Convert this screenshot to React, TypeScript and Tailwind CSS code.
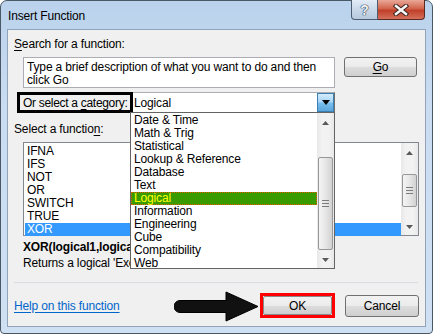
import React from "react";

const font = "font-['Liberation_Sans',Arial,sans-serif]";

function UpArrow() {
  return (
    <svg width="7" height="4" viewBox="0 0 7 4">
      <path d="M0 4 L3.5 0 L7 4 Z" fill="#5a5a5a" />
    </svg>
  );
}
function DownArrow() {
  return (
    <svg width="7" height="4" viewBox="0 0 7 4">
      <path d="M0 0 L3.5 4 L7 0 Z" fill="#5a5a5a" />
    </svg>
  );
}

function Thumb({ h }: { h: string }) {
  return (
    <div
      className={`w-[15px] ${h} rounded-[2px] border border-[#979797] bg-[linear-gradient(90deg,#f4f4f4,#e6e6e6_50%,#d2d2d2)] flex flex-col items-center justify-center gap-[2px]`}
    >
      <div className="w-[7px] h-[1px] bg-[#7c7c7c]" />
      <div className="w-[7px] h-[1px] bg-[#7c7c7c]" />
      <div className="w-[7px] h-[1px] bg-[#7c7c7c]" />
    </div>
  );
}

const categories = [
  "Date & Time",
  "Math & Trig",
  "Statistical",
  "Lookup & Reference",
  "Database",
  "Text",
  "Logical",
  "Information",
  "Engineering",
  "Cube",
  "Compatibility",
  "Web",
];

const functions = ["IFNA", "IFS", "NOT", "OR", "SWITCH", "TRUE", "XOR"];

export default function App() {
  return (
    <div className={`${font} text-[12px] tracking-[-0.15px] text-black w-[433px] h-[334px] relative`}>
      <div className="w-[433px] h-[334px] border border-[#4a5866] rounded-t-[7px] rounded-b-[4px] bg-[linear-gradient(180deg,#bad2ec,#c9dcf1_30%,#cfe0f3)] flex flex-col relative">
        {/* Title bar */}
        <div className="h-[28px] flex items-center pl-[7px] pt-[1px]">
          <span className="leading-[14px] text-[12px] text-black">Insert Function</span>
        </div>
        {/* caption buttons */}
        <div className="absolute top-[-1px] right-[7px] flex">
          <div className="w-[27px] h-[20px] border border-[#4d5d70] border-t-0 rounded-bl-[4px] bg-[linear-gradient(180deg,#e3ecf6,#c9d8e9_50%,#b7c9de)] flex items-center justify-center">
            <span className="text-[14px] font-bold leading-[14px] text-[#eef2f6] [text-shadow:0_0_1px_#2f3a46,0_0_1px_#2f3a46,0_0_1px_#2f3a46]">?</span>
          </div>
          <div className="w-[47px] h-[20px] border border-l-0 border-t-0 border-[#5a2a22] rounded-br-[4px] bg-[linear-gradient(180deg,#e9a897,#d2644c_45%,#c0402a_55%,#d6705a)] flex items-center justify-center">
            <svg width="16" height="12" viewBox="0 0 16 12">
              <path d="M3 2 L13 10 M13 2 L3 10" stroke="#3a2420" strokeWidth="4.5" strokeLinecap="square" />
              <path d="M3 2 L13 10 M13 2 L3 10" stroke="#f8f8f8" strokeWidth="2.5" strokeLinecap="square" />
            </svg>
          </div>
        </div>

        {/* Client area */}
        <div className="mx-[6px] h-[298px] border border-[#90a3b9] bg-[#f0f0f0] relative flex flex-col">
          <div className="mt-[7px] ml-[6px] h-[14px] leading-[14px] whitespace-nowrap">
            <span className="underline underline-offset-2">S</span>earch for a function:
          </div>

          <div className="mt-[6px] flex">
            <div className="ml-[15px] w-[312px] h-[31px] border border-[#abadb3] bg-white px-[3px] pt-[3px] leading-[13px]">
              Type a brief description of what you want to do and then click Go
            </div>
            <div className="ml-[9px] w-[73px] h-[20px] border border-[#707070] rounded-[3px] bg-[linear-gradient(180deg,#f2f2f2,#ebebeb_50%,#dddddd_51%,#cfcfcf)] flex items-center justify-center leading-[14px]">
              <span><span className="underline underline-offset-2">G</span>o</span>
            </div>
          </div>

          <div className="mt-[4px] flex items-start">
            <div className="ml-[9px] w-[116px] h-[21px] border-[3px] border-black flex items-center pl-[3px] leading-[14px] relative z-10 bg-[#f0f0f0] whitespace-nowrap overflow-hidden">
              <span className="tracking-[-0.3px]">
                Or select a <span className="underline underline-offset-2">c</span>ategory:
              </span>
            </div>
            <div className="ml-[-2px] w-[204px] h-[21px] border border-[#6f6f6f] border-t-[#abadb3] bg-white flex items-center relative">
              <span className="pl-[2px] leading-[14px]">Logical</span>
              <div className="absolute right-0 top-0 w-[17px] h-[19px] border border-[#3c7fb1] bg-[linear-gradient(180deg,#d4ecfc,#a9d6f7_45%,#79bdee_55%,#5aa6dc)] flex items-center justify-center">
                <svg width="8" height="5" viewBox="0 0 8 5">
                  <path d="M0 0 L8 0 L4 5 Z" fill="#000" />
                </svg>
              </div>
            </div>
          </div>

          <div className="mt-[9px] ml-[6px] h-[14px] leading-[14px] whitespace-nowrap">
            Select a functio<span className="underline underline-offset-2">n</span>:
          </div>

          <div className="mt-[6px] ml-[15px] w-[396px] h-[94px] border border-[#828790] bg-white flex">
            <div className="flex-1 pt-[2px] pl-[1px]">
              {functions.map((f) => (
                <div
                  key={f}
                  className={`h-[13px] leading-[13px] pl-[2px] ${
                    f === "XOR" ? "bg-[#3399ff] text-white" : ""
                  }`}
                >
                  {f}
                </div>
              ))}
            </div>
            <div className="w-[17px] h-full bg-[linear-gradient(90deg,#e8e8e8,#f2f2f2_30%,#f2f2f2_70%,#e8e8e8)] flex flex-col items-center">
              <div className="h-[17px] flex items-center justify-center mt-[1px]">
                <UpArrow />
              </div>
              <div className="mt-[13px]">
                <Thumb h="h-[33px]" />
              </div>
              <div className="flex-1" />
              <div className="h-[17px] flex items-center justify-center">
                <DownArrow />
              </div>
            </div>
          </div>

          <div className="mt-[4px] ml-[15px] w-[107px] h-[14px] leading-[14px] font-bold whitespace-nowrap overflow-hidden">
            XOR(logical1,logical2,...)
          </div>
          <div className="mt-[2px] ml-[15px] w-[107px] h-[14px] leading-[14px] whitespace-nowrap overflow-hidden">
            Returns a logical 'Exclusive Or' of all arguments.
          </div>

          <div className="mt-[12px] ml-[6px] w-[404px] h-[1px] bg-[#d9dde2]" />

          <div className="mt-[10px] h-[25px] flex items-center">
            <span className="ml-[6px] text-[#0066cc] underline underline-offset-2 leading-[14px] whitespace-nowrap">
              Help on this function
            </span>
            <svg className="ml-auto mt-[3px]" width="86" height="32" viewBox="0 0 86 32">
              <path
                d="M6 9.5 L52 9.5 L52 1 L84 15.5 L52 30 L52 21.5 L6 21.5 A6 6 0 0 1 6 9.5 Z"
                fill="#111"
                stroke="#000"
                strokeWidth="1"
              />
            </svg>
            <div className="w-[75px] h-[25px] border-[3px] border-[#ff0000] flex items-center justify-center">
              <div className="w-[69px] h-[19px] border border-[#8a8a8a] rounded-[2px] bg-[linear-gradient(180deg,#f2f2f2,#ebebeb_50%,#dddddd_51%,#cfcfcf)] flex items-center justify-center leading-[14px]">
                OK
              </div>
            </div>
            <div className="ml-[10px] mr-[6px] w-[74px] h-[22px] border border-[#707070] rounded-[3px] bg-[linear-gradient(180deg,#f2f2f2,#ebebeb_50%,#dddddd_51%,#cfcfcf)] flex items-center justify-center leading-[14px]">
              Cancel
            </div>
          </div>

          {/* Dropdown overlay */}
          <div className="absolute left-[122px] top-[82px] w-[205px] h-[157px] border border-[#646464] bg-white flex z-20">
            <div className="flex-1 pt-[1px]">
              {categories.map((c) => (
                <div
                  key={c}
                  className={`h-[13px] leading-[11px] pl-[2px] whitespace-nowrap ${
                    c === "Logical"
                      ? "bg-[#399b00] text-[#ffff00] border border-dotted border-[#e06000]"
                      : "border border-transparent"
                  }`}
                >
                  {c}
                </div>
              ))}
            </div>
            <div className="w-[17px] h-full bg-[linear-gradient(90deg,#e8e8e8,#f2f2f2_30%,#f2f2f2_70%,#e8e8e8)] flex flex-col items-center">
              <div className="h-[17px] flex items-center justify-center mt-[1px]">
                <UpArrow />
              </div>
              <div className="mt-[26px]">
                <Thumb h="h-[93px]" />
              </div>
              <div className="flex-1" />
              <div className="h-[17px] flex items-center justify-center">
                <DownArrow />
              </div>
            </div>
          </div>
        </div>
      </div>
    </div>
  );
}
